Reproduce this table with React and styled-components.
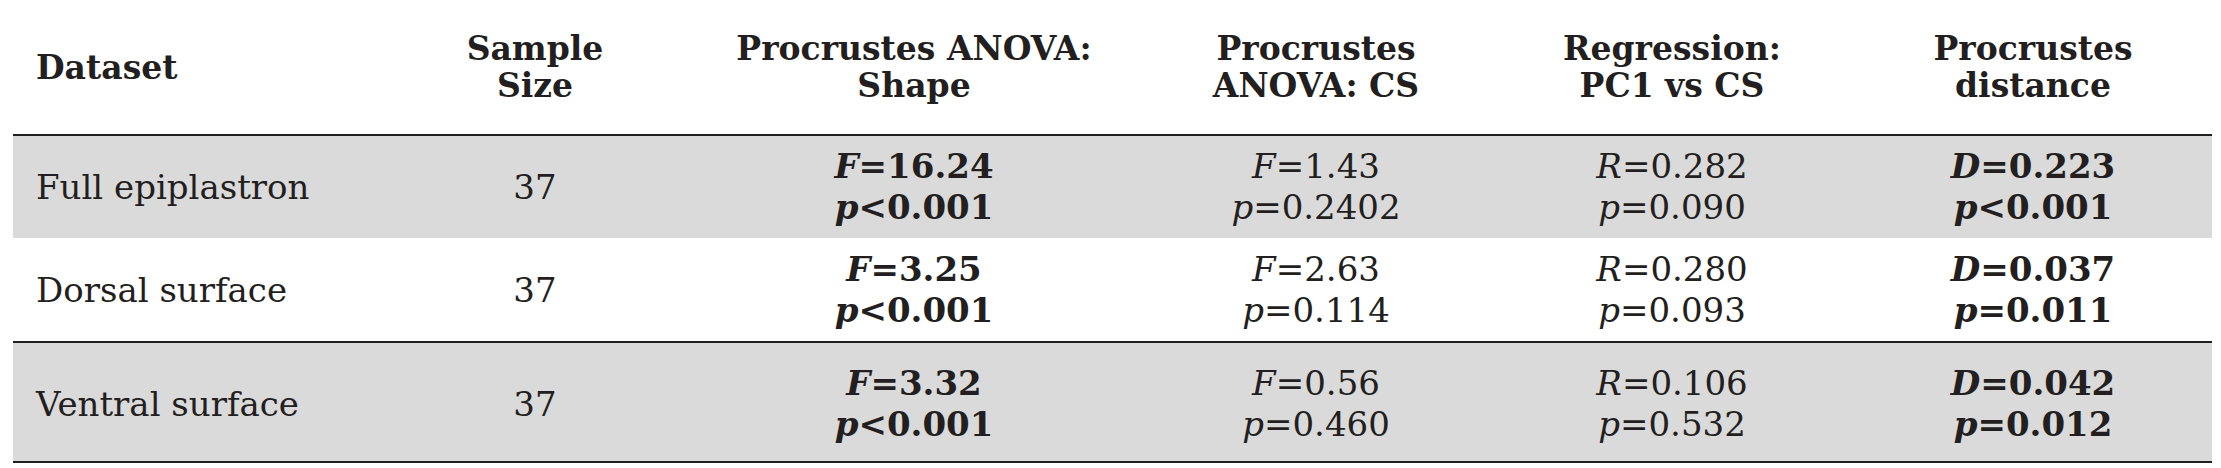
import React from 'react';
import styled, { createGlobalStyle } from 'styled-components';

const GlobalStyle = createGlobalStyle`
  body {
    margin: 0;
    background: #ffffff;
    font-family: 'DejaVu Serif', 'Liberation Serif', serif;
    color: #231f20;
  }
`;

const Page = styled.div`
  padding-left: 13px;
  width: 2199px;
`;

const Table = styled.div`
  display: flex;
  flex-direction: column;
  border-bottom: 2px solid #1f1f1f;
`;

const cols = '371px 302px 456px 348px 364px 358px';

const HeadRow = styled.div`
  display: grid;
  grid-template-columns: ${cols};
  align-items: center;
  height: 134px;
  border-bottom: 2px solid #1f1f1f;
`;

const HeadCell = styled.div`
  font-weight: bold;
  font-size: 33px;
  line-height: 37px;
  text-align: ${(p) => (p.$left ? 'left' : 'center')};
  padding-left: ${(p) => (p.$left ? '23px' : '0')};
`;

const Row = styled.div`
  display: grid;
  grid-template-columns: ${cols};
  align-items: center;
  background: ${(p) => (p.$shaded ? '#dadada' : '#ffffff')};
  padding: ${(p) => p.$pad || '10px 0'};
  border-top: ${(p) => (p.$rule ? '2px solid #1f1f1f' : 'none')};
`;

const Cell = styled.div`
  font-size: 34px;
  line-height: 41px;
  text-align: ${(p) => (p.$left ? 'left' : 'center')};
  padding-left: ${(p) => (p.$left ? '23px' : '0')};
  font-weight: ${(p) => (p.$bold ? 'bold' : 'normal')};
`;

const Stat = styled.div`
  white-space: nowrap;
`;

const Sym = styled.i`
  font-style: italic;
`;

const headers = [
  ['Procrustes ANOVA:', 'Shape'],
  ['Procrustes', 'ANOVA: CS'],
  ['Regression:', 'PC1 vs CS'],
  ['Procrustes', 'distance'],
];

const rows = [
  {
    name: 'Full epiplastron',
    n: 37,
    shaded: true,
    pad: '10px 0 10px',
    shape: ['16.24', '<0.001'],
    cs: ['1.43', '=0.2402'],
    reg: ['0.282', '=0.090'],
    dist: ['0.223', '<0.001'],
  },
  {
    name: 'Dorsal surface',
    n: 37,
    shaded: false,
    pad: '11px 0 10px',
    shape: ['3.25', '<0.001'],
    cs: ['2.63', '=0.114'],
    reg: ['0.280', '=0.093'],
    dist: ['0.037', '=0.011'],
  },
  {
    name: 'Ventral surface',
    n: 37,
    shaded: true,
    rule: true,
    pad: '20px 0 16px',
    shape: ['3.32', '<0.001'],
    cs: ['0.56', '=0.460'],
    reg: ['0.106', '=0.532'],
    dist: ['0.042', '=0.012'],
  },
];

const StatCell = ({ sym, values, bold }) => (
  <Cell $bold={bold}>
    <Stat>
      <Sym>{sym}</Sym>={values[0]}
    </Stat>
    <Stat>
      <Sym>p</Sym>
      {values[1]}
    </Stat>
  </Cell>
);

const App = () => {
  return (
    <Page>
      <GlobalStyle />
      <Table>
        <HeadRow>
          <HeadCell $left>Dataset</HeadCell>
          <HeadCell>
            Sample
            <br />
            Size
          </HeadCell>
          {headers.map((h, i) => (
            <HeadCell key={i}>
              {h[0]}
              <br />
              {h[1]}
            </HeadCell>
          ))}
        </HeadRow>
        {rows.map((r) => (
          <Row key={r.name} $shaded={r.shaded} $rule={r.rule} $pad={r.pad}>
            <Cell $left>{r.name}</Cell>
            <Cell>{r.n}</Cell>
            <StatCell sym="F" values={r.shape} bold />
            <StatCell sym="F" values={r.cs} />
            <StatCell sym="R" values={r.reg} />
            <StatCell sym="D" values={r.dist} bold />
          </Row>
        ))}
      </Table>
    </Page>
  );
};

export default App;
